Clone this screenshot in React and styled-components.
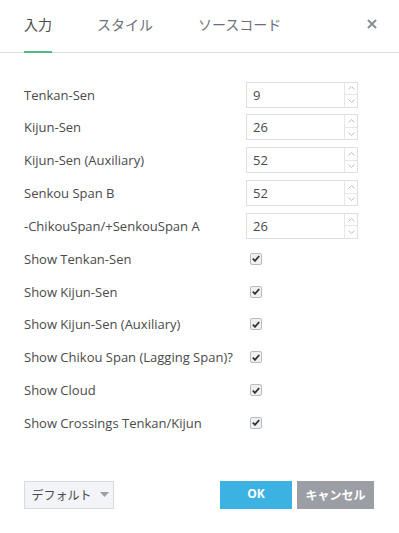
import React from "react";
import styled, { createGlobalStyle } from "styled-components";

const Global = createGlobalStyle`
  html, body { margin: 0; padding: 0; background: #fff; }
  body { font-family: "Open Sans", "Noto Sans CJK JP", sans-serif; }
`;

const Dialog = styled.div`
  width: 399px;
  height: 533px;
  background: #fff;
  display: flex;
  flex-direction: column;
  position: relative;
  color: #4a4a4a;
`;

const Header = styled.div`
  display: flex;
  align-items: stretch;
  height: 52px;
  padding: 0 24px;
  border-bottom: 1px solid #dddddd;
  gap: 45px;
`;

const Tab = styled.div`
  display: flex;
  align-items: center;
  padding-bottom: 3px;
  font-family: "Noto Sans CJK JP", sans-serif;
  font-size: 14px;
  color: ${(p) => (p.$active ? "#4a4a4a" : "#6b7079")};
  border-bottom: 2px solid ${(p) => (p.$active ? "#53b987" : "transparent")};
  box-sizing: border-box;
  height: 53px;
  margin-bottom: -1px;
`;

const Close = styled.button`
  position: absolute;
  top: 15px;
  right: 18px;
  width: 18px;
  height: 18px;
  padding: 0;
  border: 0;
  background: none;
  display: flex;
  align-items: center;
  justify-content: center;
`;

const Body = styled.div`
  display: flex;
  flex-direction: column;
  gap: 6.85px;
  padding: 28.5px 24px 0 24px;
`;

const Row = styled.div`
  display: flex;
  align-items: center;
  height: 26px;
`;

const Label = styled.div`
  width: 222px;
  font-size: 13px;
  color: #4a4a4a;
  white-space: nowrap;
`;

const NumberBox = styled.div`
  display: flex;
  width: 112px;
  height: 26px;
  box-sizing: border-box;
  border: 1px solid #dcdfe4;
  background: #fff;
`;

const NumberValue = styled.div`
  flex: 1;
  display: flex;
  align-items: center;
  padding-left: 6px;
  font-size: 13px;
  color: #4a4a4a;
`;

const Spinner = styled.div`
  width: 12px;
  border-left: 1px solid #e4e6ea;
  display: flex;
  flex-direction: column;
`;

const SpinHalf = styled.div`
  flex: 1;
  display: flex;
  align-items: center;
  justify-content: center;
  border-top: ${(p) => (p.$down ? "1px solid #e4e6ea" : "0")};
`;

const CheckBox = styled.div`
  margin-left: 4px;
  width: 12px;
  height: 12px;
  box-sizing: border-box;
  border: 1px solid #b9bcc2;
  border-radius: 2px;
  background: #eef0f2;
  display: flex;
  align-items: center;
  justify-content: center;
`;

const Footer = styled.div`
  display: flex;
  align-items: center;
  padding: 0 25px 0 24px;
  margin-top: 45px;
  gap: 5px;
`;

const DefaultButton = styled.button`
  width: 90px;
  height: 28px;
  box-sizing: border-box;
  border: 1px solid #d8dbe1;
  background: #f2f4f7;
  font-family: "Noto Sans CJK JP", sans-serif;
  font-size: 12px;
  color: #4a4a4a;
  display: flex;
  align-items: center;
  justify-content: center;
  gap: 8px;
  padding: 0 0 0 2px;
  margin-right: auto;
`;

const ActionButton = styled.button`
  width: ${(p) => p.$w}px;
  height: 28px;
  border: 0;
  padding: 0 0 ${(p) => p.$pb || 0}px 0;
  background: ${(p) => p.$bg};
  color: #fff;
  font-family: "Open Sans", "Noto Sans CJK JP", sans-serif;
  font-weight: 700;
  font-size: ${(p) => p.$fs}px;
  display: flex;
  align-items: center;
  justify-content: center;
`;

const inputs = [
  ["Tenkan-Sen", "9"],
  ["Kijun-Sen", "26"],
  ["Kijun-Sen (Auxiliary)", "52"],
  ["Senkou Span B", "52"],
  ["-ChikouSpan/+SenkouSpan A", "26"],
];

const checks = [
  "Show Tenkan-Sen",
  "Show Kijun-Sen",
  "Show Kijun-Sen (Auxiliary)",
  "Show Chikou Span (Lagging Span)?",
  "Show Cloud",
  "Show Crossings Tenkan/Kijun",
];

const Chevron = ({ up }) => (
  <svg width="7" height="4" viewBox="0 0 7 4">
    <path
      d={up ? "M0.5 3.5 L3.5 0.5 L6.5 3.5" : "M0.5 0.5 L3.5 3.5 L6.5 0.5"}
      fill="none"
      stroke="#b4b8bf"
      strokeWidth="0.9"
    />
  </svg>
);

export default function App() {
  return (
    <>
      <Global />
      <Dialog>
        <Header>
          <Tab $active>入力</Tab>
          <Tab>スタイル</Tab>
          <Tab>ソースコード</Tab>
        </Header>
        <Close aria-label="close">
          <svg width="10" height="10" viewBox="0 0 10 10">
            <path d="M1 1 L9 9 M9 1 L1 9" stroke="#8a8e96" strokeWidth="2" />
          </svg>
        </Close>
        <Body>
          {inputs.map(([label, value]) => (
            <Row key={label}>
              <Label>{label}</Label>
              <NumberBox>
                <NumberValue>{value}</NumberValue>
                <Spinner>
                  <SpinHalf>
                    <Chevron up />
                  </SpinHalf>
                  <SpinHalf $down>
                    <Chevron />
                  </SpinHalf>
                </Spinner>
              </NumberBox>
            </Row>
          ))}
          {checks.map((label) => (
            <Row key={label}>
              <Label>{label}</Label>
              <CheckBox>
                <svg width="8" height="7" viewBox="0 0 8 7">
                  <path d="M0.8 3.6 L3 5.8 L7.2 1" fill="none" stroke="#2f3136" strokeWidth="1.8" />
                </svg>
              </CheckBox>
            </Row>
          ))}
        </Body>
        <Footer>
          <DefaultButton>
            デフォルト
            <svg width="9" height="5" viewBox="0 0 9 5">
              <path d="M0 0 L9 0 L4.5 5 Z" fill="#9a9ea5" />
            </svg>
          </DefaultButton>
          <ActionButton $w={72} $bg="#3bb2e2" $fs={12} $pb={3}>OK</ActionButton>
          <ActionButton $w={77} $bg="#9b9ea4" $fs={12}>キャンセル</ActionButton>
        </Footer>
      </Dialog>
    </>
  );
}
